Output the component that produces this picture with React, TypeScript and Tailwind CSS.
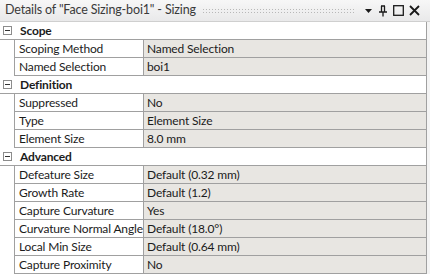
import React from "react";

type Row = { label: string; value: string };
type Group = { title: string; rows: Row[] };

const groups: Group[] = [
    {
        title: "Scope",
        rows: [
            { label: "Scoping Method", value: "Named Selection" },
            { label: "Named Selection", value: "boi1" },
        ],
    },
    {
        title: "Definition",
        rows: [
            { label: "Suppressed", value: "No" },
            { label: "Type", value: "Element Size" },
            { label: "Element Size", value: "8.0 mm" },
        ],
    },
    {
        title: "Advanced",
        rows: [
            { label: "Defeature Size", value: "Default (0.32 mm)" },
            { label: "Growth Rate", value: "Default (1.2)" },
            { label: "Capture Curvature", value: "Yes" },
            { label: "Curvature Normal Angle", value: "Default (18.0°)" },
            { label: "Local Min Size", value: "Default (0.64 mm)" },
            { label: "Capture Proximity", value: "No" },
        ],
    },
];

function MinusBox() {
    return (
        <svg width="9" height="9" viewBox="0 0 9 9" className="shrink-0">
            <rect x="0.5" y="0.5" width="8" height="8" fill="#fff" stroke="#8c8c8c" />
            <line x1="2" y1="4.5" x2="7" y2="4.5" stroke="#333" />
        </svg>
    );
}

function TitleBar() {
    return (
        <div className="h-[22px] flex items-center bg-gradient-to-b from-[#f7f7f7] to-[#e9e9ea] border-b border-[#cfcfcf] pl-[5px] pr-[10px]">
            <span className="text-[12.5px] text-[#3a3a3a] whitespace-nowrap leading-none">
                Details of "Face Sizing-boi1" - Sizing
            </span>
            <div className="flex-1 ml-[6px] mr-[10px] h-[6px] bg-[radial-gradient(#b8b8b8_0.8px,transparent_0.9px)] bg-[length:3px_3px]" />
            <div className="flex items-center gap-[5px] text-[#1a1a1a]">
                {/* dropdown arrow */}
                <svg width="9" height="9" viewBox="0 0 9 9">
                    <path d="M1 3 L8 3 L4.5 7 Z" fill="#1a1a1a" />
                </svg>
                {/* pin */}
                <svg width="10" height="12" viewBox="0 0 10 12">
                    <path d="M3 1 H7 M3.5 1 V7 M6.5 1 V7 M1 7 H9 M5 7 V11.5" stroke="#1a1a1a" strokeWidth="1.3" fill="none" />
                </svg>
                {/* maximize */}
                <svg width="11" height="11" viewBox="0 0 11 11">
                    <rect x="0.7" y="0.7" width="9.6" height="9.6" fill="none" stroke="#1a1a1a" strokeWidth="1.3" />
                </svg>
                {/* close */}
                <svg width="11" height="11" viewBox="0 0 11 11">
                    <path d="M1 1 L10 10 M10 1 L1 10" stroke="#1a1a1a" strokeWidth="1.8" />
                </svg>
            </div>
        </div>
    );
}

export default function App() {
    return (
        <div
            className="w-[430px] h-[276px] bg-white overflow-hidden text-[12px] tracking-[-0.15px] text-[#1b1b1b]"
            style={{ fontFamily: 'Lato, "Noto Sans", sans-serif' }}
        >
            <TitleBar />
            <div className="pr-[3px] bg-[#f4f4f4]">
                <div className="bg-white border-r border-[#a0a0a0]">
                    {groups.map((g) => (
                        <div key={g.title}>
                            <div className="h-[18px] flex items-center gap-[8px] pl-[3px] border-b border-[#a0a0a0] bg-white">
                                <MinusBox />
                                <span className="font-bold leading-none">{g.title}</span>
                            </div>
                            {g.rows.map((r) => (
                                <div key={r.label} className="h-[18px] flex pl-[14px]">
                                    <div className="w-[130px] flex items-center pl-[4px] border-l border-r border-b border-[#a0a0a0] bg-white whitespace-nowrap leading-none">
                                        {r.label}
                                    </div>
                                    <div className="flex-1 flex items-center pl-[3px] border-b border-[#a0a0a0] bg-[#e8e6e2] whitespace-nowrap leading-none">
                                        {r.value}
                                    </div>
                                </div>
                            ))}
                        </div>
                    ))}
                </div>
            </div>
        </div>
    );
}
